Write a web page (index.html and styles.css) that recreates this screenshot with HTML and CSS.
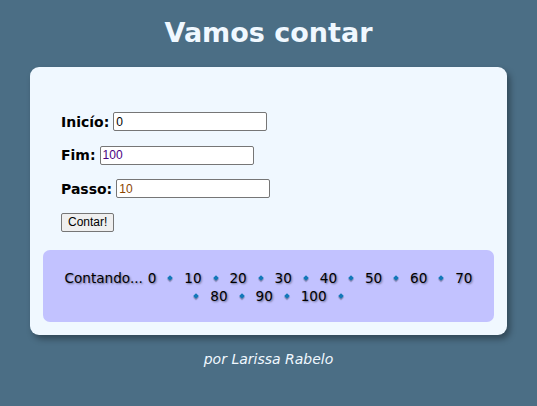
FILE: index.html
```html
<!DOCTYPE html>
<html lang="pt-br">
<head>
<meta charset="UTF-8">
<title>Vamos contar</title>
<link rel="stylesheet" href="styles.css">
</head>
<body>
<header class="top"><h1 class="title">Vamos contar</h1></header>
<main class="card">
  <form class="form">
    <div class="row"><label class="lbl" for="ini">Inicío:</label><input class="field" id="ini" type="text" value="0"></div>
    <div class="row"><label class="lbl" for="fim">Fim:</label><input class="field" id="fim" type="text" value="100"></div>
    <div class="row"><label class="lbl" for="passo">Passo:</label><input class="field" id="passo" type="text" value="10"></div>
    <div class="row"><button class="btn" type="button">Contar!</button></div>
  </form>
  <div class="res">Contando... 0 <span class="d"></span> 10 <span class="d"></span> 20 <span class="d"></span> 30 <span class="d"></span> 40 <span class="d"></span> 50 <span class="d"></span> 60 <span class="d"></span> 70 <span class="d"></span> 80 <span class="d"></span> 90 <span class="d"></span> 100 <span class="d"></span></div>
</main>
<footer class="foot">por Larissa Rabelo</footer>
</body>
</html>
```
FILE: styles.css
```css
html, body { margin: 0; padding: 0; }
body {
  background: #4b6e85;
  font-family: Verdana, "DejaVu Sans", sans-serif;
  color: #000;
  height: 406px;
  overflow: hidden;
}
.top { padding-top: 15px; }
.title {
  margin: 0;
  text-align: center;
  color: #f0f8ff;
  font-size: 27px;
  font-weight: bold;
  line-height: 36px;
}
.card {
  margin: 16px 30px 0 30px;
  background: #f0f8ff;
  border-radius: 9px;
  padding: 13px;
  box-shadow: 3px 4px 6px rgba(0,0,0,0.35);
}
.form {
  padding: 32px 18px 0 18px;
  display: flex;
  flex-direction: column;
  gap: 14px;
}
.row { display: flex; align-items: center; gap: 4px; height: 19.5px; }
.lbl { font-weight: bold; font-size: 14px; }
.field {
  font-family: "Liberation Sans", Arial, sans-serif;
  font-size: 12px;
  width: 148px;
  height: 15px;
  padding: 1px 2px;
  border: 1px solid #767676;
  border-radius: 2px;
  background: #fff;
}
#fim { color: #4b0082; }
#passo { color: #8b4500; }
.btn {
  font-family: "Liberation Sans", Arial, sans-serif;
  font-size: 12px;
  height: 19px;
  padding: 0 6px;
  border: 1px solid #767676;
  border-radius: 2px;
  background: #efefef;
  color: #000;
}
.res {
  margin-top: 18px;
  background: #c2c2ff;
  border-radius: 7px;
  padding: 19px 20px 17px 20px;
  text-align: center;
  font-size: 13.6px;
  line-height: 18px;
  word-spacing: 0.6px;
  text-shadow: 1px 1px 2px rgba(0,0,0,0.45);
}
.d {
  display: inline-block;
  width: 4px;
  height: 4px;
  background: #1278b8;
  transform: rotate(45deg);
  margin: 0 7px;
  vertical-align: 3px;
  box-shadow: 1px 1px 1px rgba(0,0,0,0.3);
}
.foot {
  margin-top: 16px;
  text-align: center;
  color: #f0f8ff;
  font-style: italic;
  font-size: 14px;
}
```
